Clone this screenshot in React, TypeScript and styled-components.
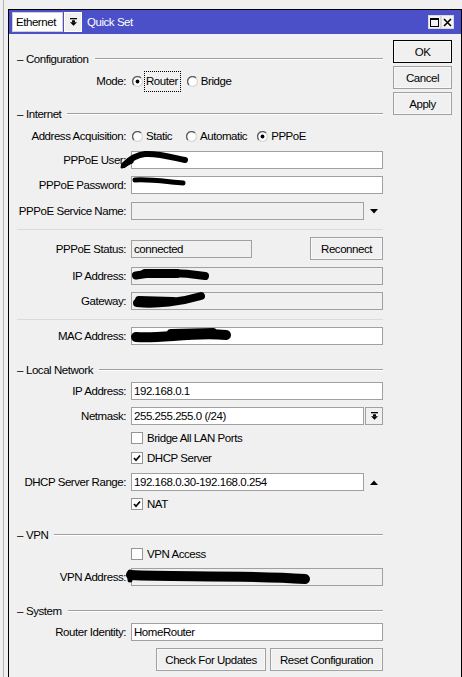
import React from "react";
import styled, { createGlobalStyle } from "styled-components";

const GlobalStyle = createGlobalStyle`
  html, body {
    margin: 0;
    padding: 0;
    background: #f0f0f0;
  }
  body {
    font-family: "Liberation Sans", Arial, sans-serif;
    font-size: 11.5px;
    color: #000;
    overflow: hidden;
  }
`;

const Desktop = styled.div`
  width: 462px;
  height: 677px;
  padding: 9px 0 0 8px;
  box-sizing: border-box;
  background: linear-gradient(to right, #f0f0f0 3px, #b4b4b4 3px, #b4b4b4 4px, #f0f0f0 4px);
  overflow: hidden;
`;

const Window = styled.div`
  width: 454px;
  height: 700px;
  box-sizing: border-box;
  border: 1px solid #000;
  background: #f0f0f0;
  letter-spacing: -0.45px;
`;

const TitleBar = styled.div`
  height: 24px;
  background: #4b4fc8;
  display: flex;
  align-items: center;
  padding: 0 7px 0 3px;
`;

const Combo = styled.div`
  width: 51px;
  height: 20px;
  box-sizing: border-box;
  background: #fff;
  border: 1px solid #d0d0d0;
  padding-left: 3px;
  line-height: 18px;
`;

const ArrowButton = styled.div<{ $w?: number; $h?: number }>`
  width: ${(p) => p.$w ?? 18}px;
  height: ${(p) => p.$h ?? 20}px;
  box-sizing: border-box;
  margin-left: 1px;
  background: #f0f0f0;
  border: 1px solid ${(p) => (p.$h ? "#a0a0a0" : "#ffffff")};
  display: flex;
  align-items: center;
  justify-content: center;
`;

const Title = styled.span`
  color: #fff;
  margin-left: 5px;
  flex: 1;
`;

const TitleButton = styled.div`
  width: 13px;
  height: 14px;
  box-sizing: border-box;
  background: #f4f4f4;
  border: 1px solid #d8d8d8;
  display: flex;
  align-items: center;
  justify-content: center;
`;

const Body = styled.div`
  display: flex;
  padding-left: 6px;
`;

const Main = styled.div`
  width: 368px;
  display: flex;
  flex-direction: column;
`;

const Side = styled.div`
  display: flex;
  flex-direction: column;
  gap: 3px;
  padding-top: 6px;
  margin-left: 10px;
`;

const Button = styled.div<{ $w: number; $default?: boolean }>`
  width: ${(p) => p.$w}px;
  height: 23px;
  box-sizing: border-box;
  border: 1px solid ${(p) => (p.$default ? "#000" : "#a0a0a0")};
  box-shadow: inset 0 0 0 1px #f8f8f8;
  background: #f0f0f0;
  display: flex;
  align-items: center;
  justify-content: center;
  white-space: nowrap;
`;

const GroupHead = styled.div<{ $mt: number }>`
  display: flex;
  align-items: center;
  height: 16px;
  margin-top: ${(p) => p.$mt}px;
  padding-left: 2px;
  gap: 3px;

  &::after {
    content: "";
    flex: 1;
    margin-left: 3px;
    border-top: 1px solid #a0a0a0;
    border-bottom: 1px solid #fff;
  }
`;

const Separator = styled.div<{ $mt: number }>`
  height: 1px;
  margin: ${(p) => p.$mt}px 0 0 2px;
  background: #dadada;
`;

const Row = styled.div<{ $mt: number; $h?: number; $end?: boolean }>`
  display: flex;
  align-items: center;
  margin-top: ${(p) => p.$mt}px;
  height: ${(p) => p.$h ?? 18}px;
  justify-content: ${(p) => (p.$end ? "flex-end" : "flex-start")};
  gap: ${(p) => (p.$end ? "4px" : "0")};
`;

const Label = styled.span`
  width: 116px;
  flex: none;
  box-sizing: border-box;
  padding-right: 5px;
  text-align: right;
  white-space: nowrap;
`;

const Indent = styled.span`
  width: 116px;
  flex: none;
`;

const Field = styled.div<{ $w?: number; $disabled?: boolean }>`
  position: relative;
  width: ${(p) => p.$w ?? 252}px;
  height: 18px;
  flex: none;
  box-sizing: border-box;
  border: 1px solid #a0a0a0;
  background: ${(p) => (p.$disabled ? "#f0f0f0" : "#fff")};
  padding-left: 2px;
  line-height: 16px;
  white-space: nowrap;
`;

const Scribble = styled.svg`
  position: absolute;
  left: -1px;
  top: -1px;
  overflow: visible;
  pointer-events: none;
`;

const Choice = styled.span<{ $focus?: boolean; $gap?: number }>`
  display: flex;
  align-items: center;
  gap: 2px;
  margin-right: ${(p) => p.$gap ?? 8}px;
  height: 20px;
  span {
    box-sizing: border-box;
    padding: 0 2px 0 1px;
    line-height: 19px;
    height: 19px;
    outline: ${(p) => (p.$focus ? "1px dotted #000" : "none")};
  }
`;

const Check = styled.span`
  display: flex;
  align-items: center;
  gap: 4px;
`;

const Box = styled.span`
  width: 12px;
  height: 12px;
  box-sizing: border-box;
  border: 1px solid #959595;
  background: #fff;
  display: flex;
  align-items: center;
  justify-content: center;
`;

const Spin = styled.span`
  width: 19px;
  display: flex;
  justify-content: center;
  margin-left: 1px;
`;

const DropIcon = () => (
  <svg width="7" height="8" viewBox="0 0 7 8">
    <rect x="0" y="0" width="7" height="1.3" fill="#000" />
    <rect x="2" y="2.3" width="3" height="2" fill="#000" />
    <polygon points="0,4.2 7,4.2 3.5,7.8" fill="#000" />
  </svg>
);

const Triangle = ({ up }: { up?: boolean }) => (
  <svg width="8" height="5" viewBox="0 0 8 5">
    <polygon points={up ? "0,5 8,5 4,0.5" : "0,0 8,0 4,4.5"} fill="#000" />
  </svg>
);

const Radio = ({ on }: { on?: boolean }) => (
  <svg width="11" height="11" viewBox="0 0 11 11" style={{ marginLeft: 1 }}>
    <circle cx="5.5" cy="5.5" r="4.6" fill="#fff" />
    <path d="M9 2 A4.6 4.6 0 0 0 2 9" fill="none" stroke="#5e5e5e" strokeWidth="1.4" />
    <path d="M2 9 A4.6 4.6 0 0 0 9 2" fill="none" stroke="#d6d6d6" strokeWidth="1.1" />
    {on && <circle cx="5.5" cy="5.5" r="1.9" fill="#000" />}
  </svg>
);

const Checkbox = ({ on, label }: { on?: boolean; label: string }) => (
  <Check>
    <Box>
      {on && (
        <svg width="8" height="8" viewBox="0 0 8 8">
          <path d="M1 4 L3 6.2 L7 1.5" fill="none" stroke="#000" strokeWidth="1.7" />
        </svg>
      )}
    </Box>
    {label}
  </Check>
);

// hidden values are drawn over by thick marker strokes
const Redacted = ({ strokes }: { strokes: [string, number][] }) => (
  <Scribble width="1" height="1">
    {strokes.map(([d, w], i) => (
      <path key={i} d={d} fill="none" stroke="#000" strokeWidth={w} strokeLinecap="round" />
    ))}
  </Scribble>
);

export default function App() {
  return (
    <>
      <GlobalStyle />
      <Desktop>
        <Window>
          <TitleBar>
            <Combo>Ethernet</Combo>
            <ArrowButton>
              <DropIcon />
            </ArrowButton>
            <Title>Quick Set</Title>
            <TitleButton>
              <svg width="9" height="9" viewBox="0 0 9 9">
                <rect x="0.5" y="0.5" width="8" height="8" fill="none" stroke="#000" />
                <rect x="0.5" y="0.5" width="8" height="1.5" fill="#000" />
              </svg>
            </TitleButton>
            <TitleButton>
              <svg width="9" height="9" viewBox="0 0 9 9">
                <path d="M1 1 L8 8 M8 1 L1 8" stroke="#000" strokeWidth="1.6" />
              </svg>
            </TitleButton>
          </TitleBar>

          <Body>
            <Main>
              <GroupHead $mt={17}>
                <span>–</span>
                <span>Configuration</span>
              </GroupHead>
              <Row $mt={4} $h={20}>
                <Label>Mode:</Label>
                <Choice $focus $gap={6}>
                  <Radio on />
                  <span>Router</span>
                </Choice>
                <Choice>
                  <Radio />
                  <span>Bridge</span>
                </Choice>
              </Row>

              <GroupHead $mt={15}>
                <span>–</span>
                <span>Internet</span>
              </GroupHead>
              <Row $mt={6} $h={16}>
                <Label>Address Acquisition:</Label>
                <Choice $gap={11}>
                  <Radio />
                  <span>Static</span>
                </Choice>
                <Choice $gap={7}>
                  <Radio />
                  <span>Automatic</span>
                </Choice>
                <Choice>
                  <Radio on />
                  <span>PPPoE</span>
                </Choice>
              </Row>
              <Row $mt={7}>
                <Label>PPPoE User:</Label>
                <Field>
                  <Redacted
                    strokes={[
                      ["M-7 14 C -2 9, 4 4, 14 3 C 26 2, 40 6, 54 9", 6],
                      ["M-9 16 L 1 11", 3],
                    ]}
                  />
                </Field>
              </Row>
              <Row $mt={7}>
                <Label>PPPoE Password:</Label>
                <Field>
                  <Redacted strokes={[["M4 4 C 18 3, 38 6, 52 7", 5]]} />
                </Field>
              </Row>
              <Row $mt={8}>
                <Label>PPPoE Service Name:</Label>
                <Field $w={233} $disabled />
                <Spin>
                  <Triangle />
                </Spin>
              </Row>

              <Separator $mt={9} />

              <Row $mt={7} $h={23}>
                <Label>PPPoE Status:</Label>
                <Field $w={121} $disabled>
                  connected
                </Field>
                <span style={{ flex: 1 }} />
                <Button $w={73}>Reconnect</Button>
              </Row>
              <Row $mt={7}>
                <Label>IP Address:</Label>
                <Field $disabled>
                  <Redacted
                    strokes={[
                      ["M5 8.5 C 22 5, 50 5, 74 9", 8],
                      ["M14 6.5 L 46 6.5", 9],
                    ]}
                  />
                </Field>
              </Row>
              <Row $mt={7}>
                <Label>Gateway:</Label>
                <Field $disabled>
                  <Redacted
                    strokes={[
                      ["M6 11 C 25 13, 50 10, 70 4", 8],
                      ["M8 8 L 42 9", 8],
                    ]}
                  />
                </Field>
              </Row>

              <Separator $mt={9} />

              <Row $mt={7}>
                <Label>MAC Address:</Label>
                <Field>
                  <Redacted
                    strokes={[
                      ["M5 10 C 30 12, 60 5, 95 8", 10],
                      ["M40 6 L 82 5", 8],
                    ]}
                  />
                </Field>
              </Row>

              <GroupHead $mt={17}>
                <span>–</span>
                <span>Local Network</span>
              </GroupHead>
              <Row $mt={4}>
                <Label>IP Address:</Label>
                <Field>192.168.0.1</Field>
              </Row>
              <Row $mt={7}>
                <Label>Netmask:</Label>
                <Field $w={233}>255.255.255.0 (/24)</Field>
                <ArrowButton $w={19} $h={18}>
                  <DropIcon />
                </ArrowButton>
              </Row>
              <Row $mt={5} $h={16}>
                <Indent />
                <Checkbox label="Bridge All LAN Ports" />
              </Row>
              <Row $mt={4} $h={16}>
                <Indent />
                <Checkbox on label="DHCP Server" />
              </Row>
              <Row $mt={7}>
                <Label>DHCP Server Range:</Label>
                <Field $w={233}>192.168.0.30-192.168.0.254</Field>
                <Spin>
                  <Triangle up />
                </Spin>
              </Row>
              <Row $mt={5} $h={16}>
                <Indent />
                <Checkbox on label="NAT" />
              </Row>

              <GroupHead $mt={15}>
                <span>–</span>
                <span>VPN</span>
              </GroupHead>
              <Row $mt={3} $h={16}>
                <Indent />
                <Checkbox label="VPN Access" />
              </Row>
              <Row $mt={6}>
                <Label>VPN Address:</Label>
                <Field $disabled>
                  <Redacted
                    strokes={[
                      ["M0 7 C 40 9, 110 7, 174 11", 10],
                      ["M-1 4 L -1 12", 5],
                    ]}
                  />
                </Field>
              </Row>

              <GroupHead $mt={17}>
                <span>–</span>
                <span>System</span>
              </GroupHead>
              <Row $mt={4}>
                <Label>Router Identity:</Label>
                <Field>HomeRouter</Field>
              </Row>
              <Row $mt={7} $h={23} $end>
                <Button $w={110}>Check For Updates</Button>
                <Button $w={113}>Reset Configuration</Button>
              </Row>
            </Main>

            <Side>
              <Button $w={59} $default>
                OK
              </Button>
              <Button $w={59}>Cancel</Button>
              <Button $w={59}>Apply</Button>
            </Side>
          </Body>
        </Window>
      </Desktop>
    </>
  );
}
